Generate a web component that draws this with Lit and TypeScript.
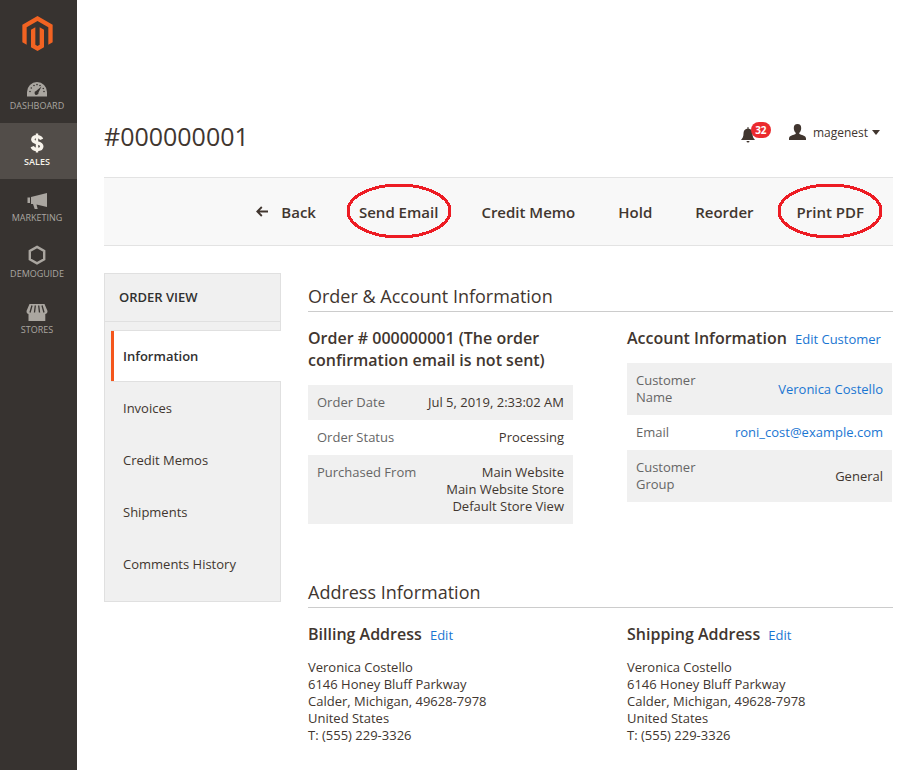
import { LitElement, html, css, svg, nothing } from "lit";
import { customElement } from "lit/decorators.js";
import { classMap } from "lit/directives/class-map.js";

const icons = {
  dashboard: svg`<path fill="currentColor" d="M2 21.500V17a10 10 0 0 1 20 0v4.500z"/>
    <g fill="#373330"><circle cx="5" cy="16.500" r=".8"/><circle cx="6.300" cy="13" r=".8"/><circle cx="9" cy="10.500" r=".8"/><circle cx="12" cy="9.600" r=".8"/><circle cx="15" cy="10.500" r=".8"/><circle cx="19" cy="16.500" r=".8"/><circle cx="18.300" cy="13.500" r=".8"/>
    <path d="M16.500 11.500 13.500 17.500a2 2 0 1 1-2.500-1.500z"/></g>`,
  sales: svg`<path fill="none" stroke="currentColor" stroke-width="3.400" d="M16.600 8.300c-.8-2-2.400-2.700-4.600-2.700-2.600 0-4.200 1.200-4.200 3 0 4.400 9 2.100 9 6.700 0 2-1.800 3.200-4.600 3.200-2.500 0-4.300-.9-5-2.900"/><path stroke="currentColor" stroke-width="2.400" d="M12 2.500v19"/>`,
  marketing: svg`<path fill="currentColor" d="M2.500 10.500H5v5.500H2.500zM6 10l16-4v14l-10.500-2.500 1.200 4.500h-3L8 17H6z"/>`,
  demoguide: svg`<path fill="none" stroke="currentColor" stroke-width="2.400" d="m12 3.900 7.200 4.100v8.200L12 20.300l-7.200-4.100V8z"/>`,
  stores: svg`<path fill="currentColor" d="M4.500 5h15l3 7c0 2.200-1.200 3-2.200 3v7H3.500v-7c-1 0-2-.8-2-3z"/><path stroke="#373330" stroke-width="1.300" d="m7 6.500-2 7M10.300 6.500l-.8 7M13.700 6.500l.8 7M17 6.500l2 7"/>`,
};

const menu = [
  { icon: icons.dashboard, label: "Dashboard" },
  { icon: icons.sales, label: "Sales", active: true },
  { icon: icons.marketing, label: "Marketing" },
  { icon: icons.demoguide, label: "Demoguide" },
  { icon: icons.stores, label: "Stores" },
];

const actions = [
  { label: "Back", back: true },
  { label: "Send Email", marked: true },
  { label: "Credit Memo" },
  { label: "Hold" },
  { label: "Reorder" },
  { label: "Print PDF", marked: true },
];

const tabs = ["Information", "Invoices", "Credit Memos", "Shipments", "Comments History"];

@customElement("app-menu")
export class AppMenu extends LitElement {
  static styles = css`
    :host { display: block; background: #373330; }
    .logo { display: flex; justify-content: center; padding: 16px 2px 16px 0; }
    .logo svg { display: block; width: 35px; height: 35px; }
    ul { list-style: none; margin: 0; padding: 0; }
    .item {
      display: flex; flex-direction: column; align-items: center;
      box-sizing: border-box; height: 56px; padding: 8px 3px 0 0;
      color: #aaa6a0; font-size: 9px; line-height: 14px;
      text-transform: uppercase; text-decoration: none;
    }
    .item.active { background: #524d49; color: #f7f3eb; font-weight: 600; }
    .item svg { width: 24px; height: 24px; flex: none; }
  `;
  render() {
    return html`<nav aria-label="Main">
      <a class="logo" href="#" aria-label="Home"><svg viewBox="0 0 24 24" fill="#f26322"><path d="M12 24l-4.455-2.572v-12l2.970-1.715v12.001l1.483.902 1.485-.902V7.713l2.971 1.715v12L12 24zM22.391 6v12l-2.969 1.714V7.713L12 3.430 4.574 7.713v12.001L1.609 18V6L12 0l10.391 6z"/></svg></a>
      <ul>${menu.map((m) => html`<li><a href="#" class=${classMap({ item: true, active: !!m.active })}>
        <svg viewBox="0 0 24 24" aria-hidden="true">${m.icon}</svg><span>${m.label}</span></a></li>`)}</ul>
    </nav>`;
  }
}

@customElement("order-tabs")
export class OrderTabs extends LitElement {
  static styles = css`
    :host { display: block; }
    nav { background: #f0f0f0; border: 1px solid #e0e0e0; }
    h2 {
      margin: 0 0 8px; padding: 14px; border-bottom: 1px solid #e0e0e0;
      font-size: 13px; line-height: 19px; font-weight: 600; color: #303030; text-transform: uppercase;
    }
    ul { list-style: none; margin: 0; padding: 0 0 11px 6px; }
    a { display: block; padding: 17px 12px; font-size: 13px; line-height: 18px; color: #41362f; text-decoration: none; }
    .active {
      margin-right: -1px; padding: 16px 12px; background: #fff; color: #303030; font-weight: 600;
      border: solid #e0e0e0; border-width: 1px 0; box-shadow: inset 3px 0 #f4561c;
    }
  `;
  render() {
    return html`<nav aria-label="Order view"><h2>Order View</h2>
      <ul>${tabs.map((t, i) => html`<li><a href="#" class=${i ? "" : "active"}>${t}</a></li>`)}</ul></nav>`;
  }
}

@customElement("app-root")
export class AppRoot extends LitElement {
  static styles = css`
    :host {
      display: grid; grid-template-columns: 77px minmax(0, 1fr); min-height: 100vh;
      font-family: "Open Sans", "Noto Sans", sans-serif; font-size: 13px; line-height: 17px;
      color: #41362f; background: #fff;
    }
    h1, h2, h3 { margin: 0; }
    a { color: #1a76d2; text-decoration: none; }
    main { padding: 116px 12px 24px 27px; }
    .head { display: flex; justify-content: space-between; align-items: flex-start; height: 61px; }
    h1 { font-size: 25px; line-height: 40px; font-weight: 400; }
    .user { display: flex; align-items: center; gap: 17px; height: 32px; padding-right: 13px; }
    button { font: inherit; color: inherit; background: none; border: 0; padding: 0; cursor: pointer; }
    .bell { position: relative; width: 31px; height: 24px; }
    .bell svg { display: block; width: 15px; height: 18px; margin-top: 6px; }
    .badge {
      position: absolute; top: 2px; left: 10px; width: 20px; border-radius: 8px;
      background: #eb2a2e; color: #fff; font-size: 10px; line-height: 16px; font-weight: 700; text-align: center;
    }
    .account { display: flex; align-items: center; gap: 7px; font-size: 12px; }
    .account .caret { width: 8px; height: 5px; margin-left: -3px; }
    .toolbar {
      display: flex; justify-content: flex-end; align-items: center; gap: 43px;
      height: 67px; padding-right: 29px; background: #f8f8f8; border: solid #e3e3e3; border-width: 1px 0;
    }
    .action { position: relative; display: flex; align-items: center; gap: 13px; font-size: 15px; line-height: 20px; font-weight: 600; white-space: nowrap; }
    .mark { position: absolute; top: -18px; left: calc(50% - 52px); width: 104px; height: 56px; pointer-events: none; overflow: visible; }
    .body { display: grid; grid-template-columns: 177px minmax(0, 1fr); gap: 27px; margin-top: 27px; align-items: start; }
    .title { padding: 10px 0 2px; border-bottom: 1px solid #ccc; font-size: 18px; line-height: 26px; font-weight: 400; }
    .cols { display: grid; grid-template-columns: 1fr 1fr; gap: 54px; padding: 15px 1px 0 0; }
    .sub { margin-bottom: 14px; font-size: 16px; line-height: 22px; }
    .sub h3 { display: inline; font-size: 16px; font-weight: 600; }
    .sub a { margin-left: 4px; font-size: 13px; line-height: 17px; }
    table { width: 100%; border-collapse: collapse; }
    tr:nth-child(odd) { background: #f0f0f0; }
    th { padding: 9px 0 9px 9px; text-align: left; vertical-align: top; font-weight: 400; color: #666; white-space: nowrap; }
    td { padding: 9px 9px 9px 0; text-align: right; white-space: nowrap; }
    .narrow th { width: 80px; white-space: normal; }
    .address { margin-top: 45px; }
    address { font-style: normal; }
  `;

  private heading(title: string, link?: string) {
    return html`<div class="sub"><h3>${title}</h3>${link ? html` <a href="#">${link}</a>` : nothing}</div>`;
  }

  private addressBlock(title: string) {
    return html`<div>${this.heading(title, "Edit")}
      <address>Veronica Costello<br>6146 Honey Bluff Parkway<br>Calder, Michigan, 49628-7978<br>United States<br>T: (555) 229-3326</address></div>`;
  }

  render() {
    return html`<app-menu></app-menu>
    <main>
      <header class="head">
        <h1>#000000001</h1>
        <div class="user">
          <button class="bell" aria-label="Notifications"><svg viewBox="0 0 15 18" fill="currentColor"><path d="M6.500 1h1v1.500c3 .5 4 2.500 4 5 0 3 .8 4.500 2.500 6.500H0c1.700-2 2.500-3.500 2.500-6.500 0-2.500 1-4.500 4-5zM5.500 15h3a1.500 1.500 0 0 1-3 0z"/></svg><span class="badge">32</span></button>
          <button class="account">
            <svg width="17" height="16" viewBox="0 0 17 16" fill="currentColor" aria-hidden="true"><path d="M8.500 0c2.500 0 3.700 1.600 3.700 4 0 2-.7 3.800-1.900 4.800v1.300c1.700.9 6.700 1.400 6.700 4.400V16H0v-1.500c0-3 5-3.500 6.700-4.400V8.800C5.500 7.800 4.800 6 4.800 4c0-2.400 1.200-4 3.700-4z"/></svg>
            <span>magenest</span>
            <svg class="caret" viewBox="0 0 8 5" aria-hidden="true"><path fill="currentColor" d="M0 0h8L4 5z"/></svg>
          </button>
        </div>
      </header>
      <div class="toolbar" role="toolbar" aria-label="Order actions">
        ${actions.map((a) => html`<button class="action">
          ${a.back ? html`<svg width="12" height="11" viewBox="0 0 12 11" aria-hidden="true"><path fill="none" stroke="currentColor" stroke-width="1.800" d="M12 5.500H1.500M5.800 1 1.300 5.500 5.800 10"/></svg>` : nothing}
          <span>${a.label}</span>
          ${a.marked ? html`<svg class="mark" viewBox="0 0 104 56" aria-hidden="true"><ellipse cx="52" cy="27" rx="51" ry="26" fill="none" stroke="#ed1c24" stroke-width="3" shape-rendering="crispEdges"/></svg>` : nothing}
        </button>`)}
      </div>
      <div class="body">
        <order-tabs></order-tabs>
        <div>
          <section>
            <h2 class="title">Order &amp; Account Information</h2>
            <div class="cols">
              <div>${this.heading("Order # 000000001 (The order confirmation email is not sent)")}<table>
                <tr><th scope="row">Order Date</th><td>Jul 5, 2019, 2:33:02 AM</td></tr>
                <tr><th scope="row">Order Status</th><td>Processing</td></tr>
                <tr><th scope="row">Purchased From</th><td>Main Website<br>Main Website Store<br>Default Store View</td></tr>
              </table></div>
              <div>${this.heading("Account Information", "Edit Customer")}<table class="narrow">
                <tr><th scope="row">Customer Name</th><td><a href="#">Veronica Costello</a></td></tr>
                <tr><th scope="row">Email</th><td><a href="mailto:roni_cost@example.com">roni_cost@example.com</a></td></tr>
                <tr><th scope="row">Customer Group</th><td>General</td></tr>
              </table></div>
            </div>
          </section>
          <section class="address">
            <h2 class="title">Address Information</h2>
            <div class="cols">${this.addressBlock("Billing Address")}${this.addressBlock("Shipping Address")}</div>
          </section>
        </div>
      </div>
    </main>`;
  }
}
